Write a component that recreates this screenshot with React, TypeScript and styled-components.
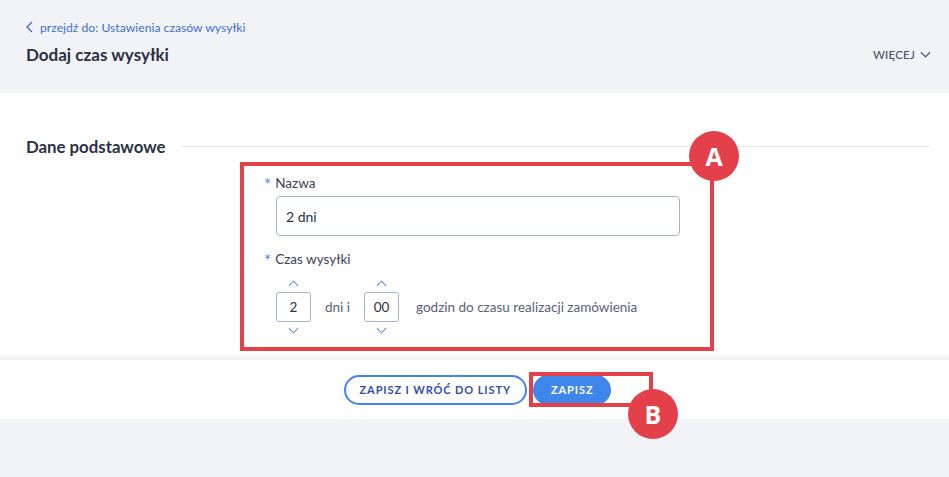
import React from "react";
import styled, { createGlobalStyle } from "styled-components";

const Global = createGlobalStyle`
  html, body { margin: 0; padding: 0; }
  body {
    background: #f2f3f7;
    font-family: "Lato", "Open Sans", sans-serif;
    color: #2b3044;
    width: 949px;
    height: 477px;
    overflow: hidden;
  }
`;

const Page = styled.div`
  display: flex;
  flex-direction: column;
  width: 949px;
  height: 477px;
  position: relative;
`;

const Header = styled.header`
  height: 93px;
  box-sizing: border-box;
  padding: 19px 18px 0 26px;
  display: flex;
  flex-direction: column;
`;

const Crumb = styled.a`
  display: flex;
  align-items: center;
  gap: 7px;
  font-size: 12.2px;
  color: #3e6fd6;
  height: 16px;
  text-decoration: none;
`;

const TitleRow = styled.div`
  display: flex;
  align-items: center;
  justify-content: space-between;
  margin-top: 7px;
  height: 24px;
`;

const Title = styled.h1`
  margin: 0;
  font-size: 17px;
  font-weight: 700;
  color: #2b3044;
`;

const More = styled.button`
  border: 0;
  background: none;
  padding: 0;
  display: flex;
  align-items: center;
  gap: 5px;
  font-family: inherit;
  font-size: 11.5px;
  font-weight: 500;
  color: #4a5068;
  letter-spacing: 0.2px;
`;

const Main = styled.section`
  background: #fff;
  height: 260px;
  box-sizing: border-box;
  padding-top: 38px;
`;

const SectionHead = styled.div`
  display: flex;
  align-items: center;
  gap: 16px;
  padding: 0 19px 0 26px;
  height: 30px;
`;

const SectionTitle = styled.h2`
  margin: 0;
  font-size: 16.8px;
  font-weight: 700;
  color: #2b3044;
  white-space: nowrap;
`;

const Rule = styled.div`
  flex: 1;
  height: 1px;
  background: #e6e7eb;
`;

const Form = styled.div`
  position: relative;
  margin-left: 264px;
  width: 416px;
  padding-top: 14px;
  display: flex;
  flex-direction: column;
`;

const Label = styled.label`
  font-size: 13.5px;
  color: #3c4156;
  height: 16px;
  display: flex;
  align-items: center;
  gap: 4px;
  &::before {
    content: "*";
    color: #4a86e8;
    font-size: 17px;
    line-height: 16px;
    padding-top: 3px;
  }
`;

const TextInput = styled.div`
  margin: 5px 0 0 12px;
  height: 40px;
  box-sizing: border-box;
  border: 1px solid #aab4cb;
  border-radius: 4px;
  display: flex;
  align-items: center;
  padding-left: 9px;
  font-size: 14px;
  color: #2b3044;
`;

const Spaced = styled.div<{ $top: number }>`
  margin-top: ${(p) => p.$top}px;
`;

const TimeRow = styled.div`
  margin: 13px 0 0 12px;
  display: flex;
  align-items: center;
`;

const Spinner = styled.div`
  display: flex;
  flex-direction: column;
  align-items: center;
  width: 35px;
  gap: 5px;
`;

const SpinBox = styled.div`
  width: 35px;
  height: 30px;
  box-sizing: border-box;
  border: 1px solid #aab4cb;
  border-radius: 3px;
  display: flex;
  align-items: center;
  justify-content: center;
  font-size: 13.5px;
  color: #2b3044;
`;

const Unit = styled.span<{ $left: number; $right: number }>`
  font-size: 13.5px;
  color: #5a6079;
  margin: 0 ${(p) => p.$right}px 0 ${(p) => p.$left}px;
`;

const Footer = styled.footer`
  background: #fff;
  height: 66px;
  box-sizing: border-box;
  padding-top: 7px;
  position: relative;
  display: flex;
  align-items: center;
  justify-content: center;
  gap: 6px;
  padding-left: 6px;
  &::before {
    content: "";
    position: absolute;
    left: 0;
    right: 0;
    top: 0;
    height: 7px;
    background: linear-gradient(#ffffff, #f1f1f3);
  }
`;

const Btn = styled.button<{ $primary?: boolean }>`
  position: relative;
  height: 30px;
  border-radius: 15px;
  box-sizing: border-box;
  padding: 0 ${(p) => (p.$primary ? 16 : 14)}px;
  font-family: inherit;
  font-size: 11px;
  font-weight: 700;
  letter-spacing: 0.9px;
  border: 2px solid #3f86eb;
  background: ${(p) => (p.$primary ? "#3f86eb" : "#fff")};
  color: ${(p) => (p.$primary ? "#fff" : "#2f4fa8")};
`;

const Rest = styled.div`
  flex: 1;
  background: #f2f3f7;
`;

const Frame = styled.div<{ $l: number; $t: number; $w: number; $h: number }>`
  position: absolute;
  left: ${(p) => p.$l}px;
  top: ${(p) => p.$t}px;
  width: ${(p) => p.$w}px;
  height: ${(p) => p.$h}px;
  box-sizing: border-box;
  border: 4.5px solid #e3404a;
  pointer-events: none;
`;

const Badge = styled.div<{ $cx: number; $cy: number }>`
  position: absolute;
  left: ${(p) => p.$cx - 25}px;
  top: ${(p) => p.$cy - 25}px;
  width: 50px;
  height: 50px;
  border-radius: 50%;
  background: #e3404a;
  color: #fff;
  font-family: "Open Sans", sans-serif;
  font-weight: 700;
  font-size: 25px;
  display: flex;
  align-items: center;
  justify-content: center;
`;

const Chevron = ({ dir, color }: { dir: "up" | "down" | "left"; color: string }) => {
  if (dir === "left")
    return (
      <svg width="7" height="12" viewBox="0 0 7 12">
        <path d="M6 1 L1 6 L6 11" fill="none" stroke={color} strokeWidth="1.4" />
      </svg>
    );
  const d = dir === "up" ? "M1 6 L6 1 L11 6" : "M1 1 L6 6 L11 1";
  return (
    <svg width="11" height="7" viewBox="0 0 12 7">
      <path d={d} fill="none" stroke={color} strokeWidth="1.2" />
    </svg>
  );
};

const Spin = ({ value }: { value: string }) => (
  <Spinner>
    <Chevron dir="up" color="#5b8ee6" />
    <SpinBox>{value}</SpinBox>
    <Chevron dir="down" color="#5b8ee6" />
  </Spinner>
);

export default function App() {
  return (
    <>
      <Global />
      <Page>
        <Header>
          <Crumb>
            <Chevron dir="left" color="#3e6fd6" />
            przejdź do: Ustawienia czasów wysyłki
          </Crumb>
          <TitleRow>
            <Title>Dodaj czas wysyłki</Title>
            <More>
              WIĘCEJ
              <svg width="11" height="7" viewBox="0 0 12 7">
                <path d="M1 1 L6 6 L11 1" fill="none" stroke="#5a6079" strokeWidth="1.3" />
              </svg>
            </More>
          </TitleRow>
        </Header>
        <Main>
          <SectionHead>
            <SectionTitle>Dane podstawowe</SectionTitle>
            <Rule />
          </SectionHead>
          <Form>
            <Label>Nazwa</Label>
            <TextInput>2 dni</TextInput>
            <Spaced $top={15}>
              <Label>Czas wysyłki</Label>
            </Spaced>
            <TimeRow>
              <Spin value="2" />
              <Unit $left={14} $right={14}>dni i</Unit>
              <Spin value="00" />
              <Unit $left={17} $right={0}>godzin do czasu realizacji zamówienia</Unit>
            </TimeRow>
          </Form>
        </Main>
        <Footer>
          <Btn>ZAPISZ I WRÓĆ DO LISTY</Btn>
          <Btn $primary>ZAPISZ</Btn>
        </Footer>
        <Rest />
        <Frame $l={240} $t={162} $w={474} $h={189} />
        <Badge $cx={714} $cy={156}>A</Badge>
        <Frame $l={529} $t={372} $w={124} $h={35} />
        <Badge $cx={653} $cy={414}>B</Badge>
      </Page>
    </>
  );
}
